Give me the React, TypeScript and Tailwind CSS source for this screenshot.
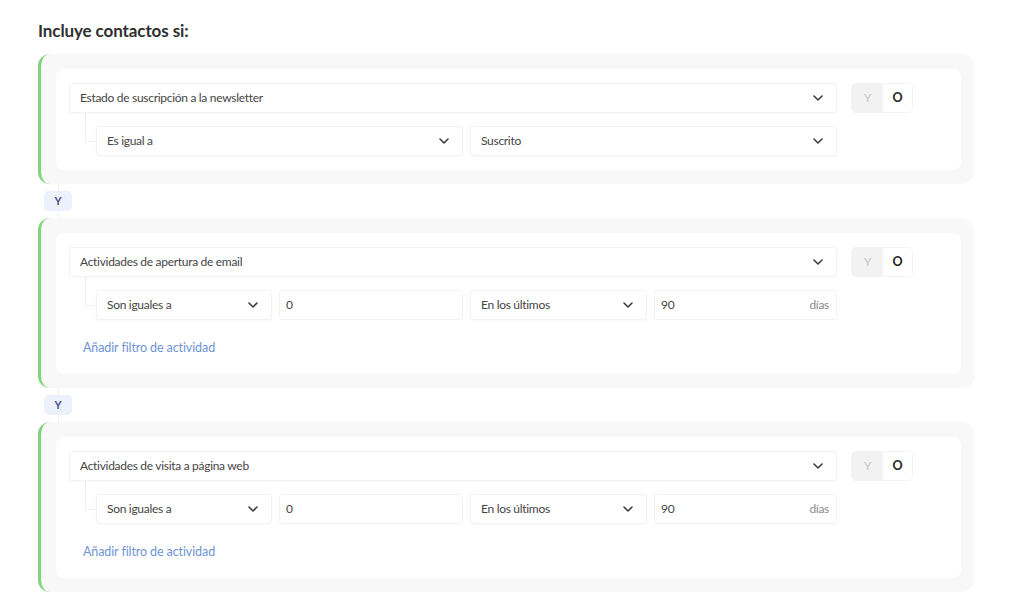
import { ChevronDown } from "lucide-react";

type Field =
  | { kind: "select"; value: string; span?: boolean }
  | { kind: "input"; value: string; suffix?: string };

type Rule = {
  property: string;
  fields: Field[];
  activity?: boolean;
};

const rules: Rule[] = [
  {
    property: "Estado de suscripción a la newsletter",
    fields: [
      { kind: "select", value: "Es igual a", span: true },
      { kind: "select", value: "Suscrito", span: true },
    ],
  },
  {
    property: "Actividades de apertura de email",
    fields: [
      { kind: "select", value: "Son iguales a" },
      { kind: "input", value: "0" },
      { kind: "select", value: "En los últimos" },
      { kind: "input", value: "90", suffix: "días" },
    ],
    activity: true,
  },
  {
    property: "Actividades de visita a página web",
    fields: [
      { kind: "select", value: "Son iguales a" },
      { kind: "input", value: "0" },
      { kind: "select", value: "En los últimos" },
      { kind: "input", value: "90", suffix: "días" },
    ],
    activity: true,
  },
];

function Select({ value, span }: { value: string; span?: boolean }) {
  return (
    <div
      className={`flex h-[30px] items-center justify-between rounded-[3px] border border-[#f3f3f3] bg-white pl-[10px] pr-[10px] text-[12px] text-[#454545] shadow-[0_1px_2px_rgba(0,0,0,0.03)] ${
        span ? "col-span-2" : ""
      }`}
    >
      <span>{value}</span>
      <ChevronDown size={16} strokeWidth={2.4} className="text-[#3d3d3d]" />
    </div>
  );
}

function Input({ value, suffix }: { value: string; suffix?: string }) {
  return (
    <div className="flex h-[30px] items-center justify-between rounded-[3px] border border-[#f3f3f3] bg-white pl-[6px] pr-[7px] text-[12px] text-[#454545]">
      <span>{value}</span>
      {suffix && <span className="text-[#8a8a8a]">{suffix}</span>}
    </div>
  );
}

function AndOr() {
  return (
    <div className="flex h-[30px] w-[62px] shrink-0 overflow-hidden rounded-[5px] border border-[#f3f3f3] text-[12px]">
      <div className="flex w-[31px] items-center justify-center bg-[#f2f2f2] text-[#c4c4c4]">
        Y
      </div>
      <div className="flex flex-1 items-center justify-center bg-white text-[12.5px] font-bold text-[#222]">
        O
      </div>
    </div>
  );
}

function RuleGroup({ rule }: { rule: Rule }) {
  return (
    <div className="rounded-xl border-l-[3px] border-[#7fd67a] bg-[#f8f8f8] pb-[14px] pl-[15px] pr-[13px] pt-[15px]">
      <div className="flex gap-[14px] rounded-lg bg-white pb-[14px] pl-[13px] pr-[48px] pt-[14px]">
        <div className="flex w-[768px] flex-col">
          <Select value={rule.property} />
          <div className="flex">
            {/* tree connector from the property to its condition row */}
            <div className="flex w-[27px] shrink-0">
              <div className="ml-[16px] h-[29px] w-[10px] border-b border-l border-[#efefef]" />
            </div>
            <div className="mt-[13px] grid flex-1 grid-cols-[176px_184px_177px_183px] gap-[7px]">
              {rule.fields.map((f, i) =>
                f.kind === "select" ? (
                  <Select key={i} value={f.value} span={f.span} />
                ) : (
                  <Input key={i} value={f.value} suffix={f.suffix} />
                )
              )}
            </div>
          </div>
          {rule.activity && (
            <div className="pb-[3px] pl-[14px] pt-[19px] text-[12.5px] leading-[18px] tracking-[-0.1px] text-[#6f94d4]">
              Añadir filtro de actividad
            </div>
          )}
        </div>
        <AndOr />
      </div>
    </div>
  );
}

function Joiner() {
  return (
    <div className="relative flex h-[34px] items-center pl-[6px]">
      <div className="absolute bottom-0 left-[20px] top-0 w-px bg-[#f0f0f0]" />
      <div className="relative flex h-[20px] w-[28px] items-center justify-center rounded-[5px] bg-[#edf1fb] text-[11px] font-bold text-[#4b4f8e]">
        Y
      </div>
    </div>
  );
}

export default function App() {
  return (
    <div
      className="min-h-screen w-full bg-white pl-[38px] pt-[20px] tracking-[-0.3px]"
      style={{ fontFamily: "Lato, 'Noto Sans', sans-serif" }}
    >
      <h2 className="mb-[12px] text-[17px] font-bold leading-[22px] tracking-[-0.1px] text-[#2f2f2f]">
        Incluye contactos si:
      </h2>
      <div className="w-[936px]">
        {rules.map((r, i) => (
          <div key={i}>
            {i > 0 && <Joiner />}
            <RuleGroup rule={r} />
          </div>
        ))}
      </div>
    </div>
  );
}
